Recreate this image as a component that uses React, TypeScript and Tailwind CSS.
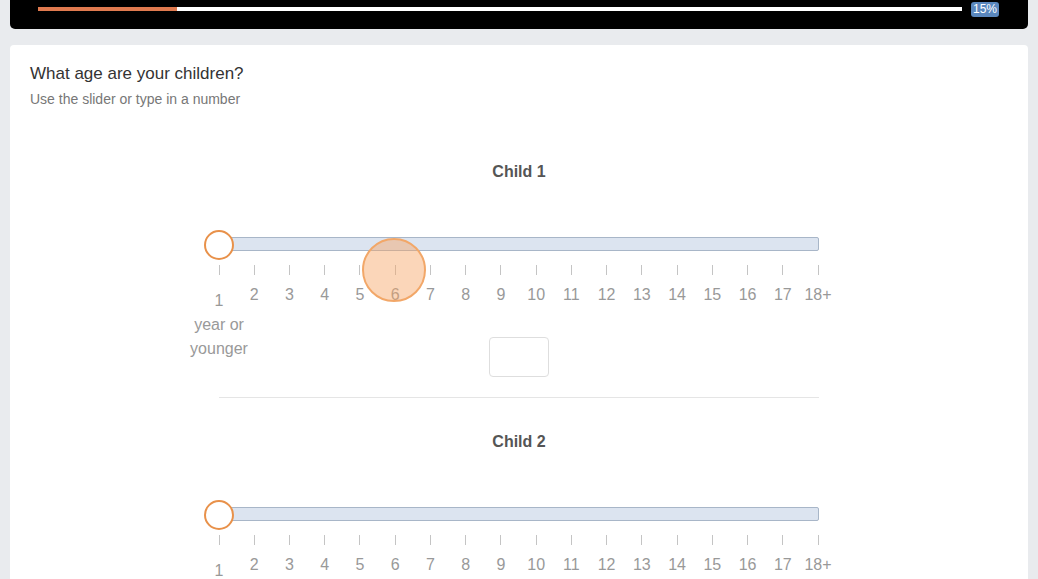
const ages = ["1", "2", "3", "4", "5", "6", "7", "8", "9", "10", "11", "12", "13", "14", "15", "16", "17", "18+"];

function AgeSlider({ label, hover }: { label: string; hover?: boolean }) {
  return (
    <div className="flex flex-col items-center">
      <h3 className="text-[16px] leading-[20px] font-bold text-[#555]">{label}</h3>
      <div className="relative mt-[55px] w-[600px]">
        {/* track */}
        <div className="h-[14px] rounded-[2px] border border-[#a8b6c8] bg-[#dce4f0]" />
        {/* handle */}
        <div className="absolute left-[-15px] top-[-7px] h-[30px] w-[30px] rounded-full border-2 border-[#e8914a] bg-white" />
        {/* ticks + labels */}
        <div className="-mx-[17.6px] mt-[14px] flex h-[41px] items-start">
          {ages.map((a, i) => (
            <div key={a} className="flex w-[35.24px] shrink-0 flex-col items-center">
              <div className="h-[10px] w-px shrink-0 bg-[#c4c4c4]" />
              <div className={i === 0 ? "mt-[14px] flex shrink-0 flex-col items-center" : "mt-[8px] flex shrink-0 flex-col items-center"}>
                <span className="whitespace-nowrap text-[16px] leading-[24px] text-[#999]">{a}</span>
                {i === 0 && (
                  <>
                    <span className="whitespace-nowrap text-[16px] leading-[24px] text-[#999]">year or</span>
                    <span className="whitespace-nowrap text-[16px] leading-[24px] text-[#999]">younger</span>
                  </>
                )}
              </div>
            </div>
          ))}
        </div>
        {hover && (
          <div className="absolute left-[143px] top-[1px] h-[64px] w-[64px] rounded-full border-2 border-[#f2a768] bg-[rgba(246,165,100,0.45)]" />
        )}
      </div>
    </div>
  );
}

export default function App() {
  return (
    <div className="h-screen overflow-hidden bg-[#e9ebee] px-[10px] font-['Liberation_Sans',Arial,sans-serif]">
      <div className="flex h-[29px] items-start gap-[9px] rounded-b-[5px] bg-black pl-[28px] pr-[29px]">
        <div className="mt-[7px] flex h-[4px] flex-1 bg-white">
          <div className="h-full w-[15%] bg-[#e07a4f]" />
        </div>
        <span className="mt-[2px] rounded-[3px] bg-[#5a87bd] px-[2px] text-[12px] leading-[15px] text-white">15%</span>
      </div>

      <div className="mt-[16px] h-[600px] rounded-[4px] bg-white px-[20px] pt-[19px]">
        <h2 className="text-[17px] leading-[20px] text-[#333]">What age are your children?</h2>
        <p className="mt-[6px] text-[14px] leading-[18px] text-[#777]">Use the slider or type in a number</p>

        <div className="mt-[54px]">
          <AgeSlider label="Child 1" hover />
          <div className="mt-[31px] flex justify-center">
            <input className="h-[40px] w-[60px] rounded-[4px] border border-[#dedede] bg-white outline-none" />
          </div>
          <div className="mx-auto mt-[20px] h-px w-[600px] bg-[#e5e5e5]" />
          <div className="mt-[34px]">
            <AgeSlider label="Child 2" />
          </div>
        </div>
      </div>
    </div>
  );
}
